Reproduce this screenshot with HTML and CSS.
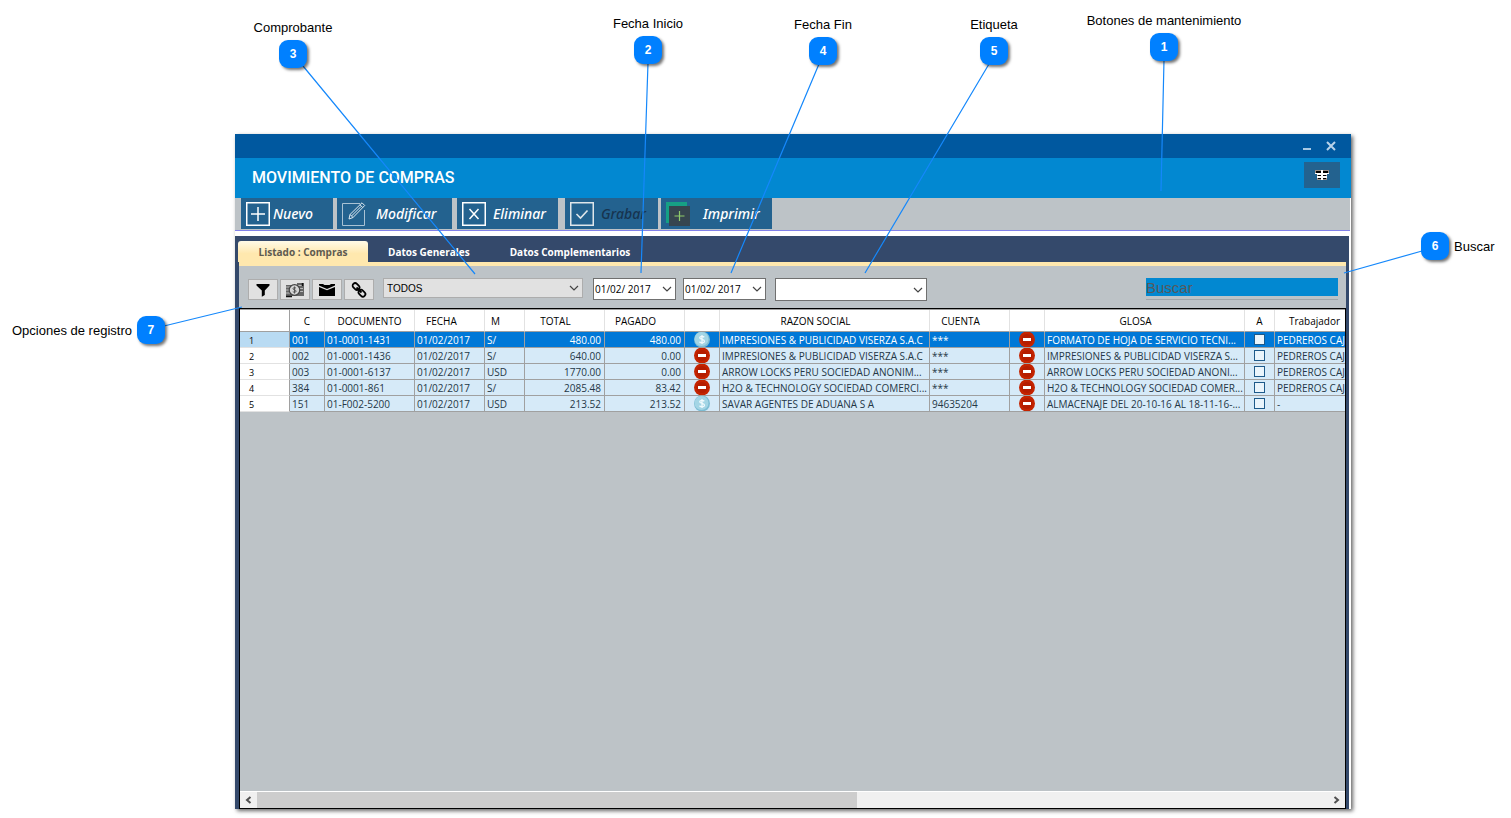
FILE: index.html
```html
<!DOCTYPE html>
<html lang="es">
<head>
<meta charset="utf-8">
<title>Movimiento de compras</title>
<link rel="stylesheet" href="styles.css">
</head>
<body>
<main class="stage">
  <section class="window">
    <div class="titlebar">
      <button class="win-btn" aria-label="Minimizar"><svg width="12" height="12" viewBox="0 0 12 12"><path d="M2 9h8" stroke="#a9c9e4" stroke-width="2"/></svg></button>
      <button class="win-btn" aria-label="Cerrar"><svg width="12" height="12" viewBox="0 0 12 12"><path d="M2 2l8 8M10 2l-8 8" stroke="#b8d3ea" stroke-width="2"/></svg></button>
    </div>
    <header class="header">
      <h1 class="title">MOVIMIENTO DE COMPRAS</h1>
      <button class="menu-btn" aria-label="Opciones"><svg width="14" height="10" viewBox="0 0 14 10"><path fill="#9c9088" d="M0 0h14v4H0zM2 5h10v5H2z"/><path fill="#000" d="M1 1h12v2H1zM3 5h8v1H3zM3 8h8v1H3z"/><path fill="#fff" d="M0 3h14v1H0zM2 4h10v1H2zM2 6h10v2H2zM6 0h2v10H6z"/></svg></button>
    </header>
    <div class="toolbar">
      <button class="tool nuevo"><svg width="24" height="24" viewBox="0 0 24 24" fill="none" stroke="#fff"><rect x=".75" y=".75" width="22.500" height="22.500" stroke-width="1.500"/><path d="M5 12h14M12 5v14" stroke-width="1.500"/></svg>Nuevo</button>
      <button class="tool modificar"><svg width="24" height="24" viewBox="0 0 24 24" fill="none" stroke="#dfe9f0"><path d="M18 1.500H.5v22h22V8" stroke="#a9c2d4"/><path d="M7 17l1-4.500L20 .8l2.700 2.700L11 15.500zM8 12.500l3 3M18 2.800l2.700 2.700M9.500 14L19 4.500"/></svg>Modificar</button>
      <button class="tool eliminar"><svg width="24" height="24" viewBox="0 0 24 24" fill="none" stroke="#fff"><rect x=".75" y=".75" width="22.500" height="22.500" stroke-width="1.500"/><path d="M7.500 7l9 10M16.500 7l-9 10" stroke-width="1.500"/></svg>Eliminar</button>
      <button class="tool grabar" disabled><svg width="24" height="24" viewBox="0 0 24 24" fill="none" stroke="#dfe6ea"><rect x=".75" y=".75" width="22.500" height="22.500" stroke-width="1.500"/><path d="M6.500 12l4 4 7-7.500" stroke-width="1.600"/></svg>Grabar</button>
      <button class="tool imprimir"><svg width="24" height="24" viewBox="0 0 24 24"><path fill="#16a085" d="M0 0h21v4H3v17H0z"/><path fill="#36454f" d="M3 4h21v20H3z"/><path d="M8.500 14h10M13.500 9v10" stroke="#8fcb6b" stroke-width="1.200"/></svg>Imprimir</button>
    </div>
    <div class="body">
      <nav class="tabs">
        <button class="tab active">Listado : Compras</button>
        <button class="tab">Datos Generales</button>
        <button class="tab">Datos Complementarios</button>
      </nav>
      <div class="panel">
        <form class="filters">
          <div class="icon-group">
            <button type="button" class="icon-btn" aria-label="Filtrar"><svg width="16" height="16" viewBox="0 0 16 16"><path d="M1.500 2h13v1.500L9.800 8.500v4.500l-3 1.700V8.500L1.500 3.500z"/></svg></button>
            <button type="button" class="icon-btn" aria-label="Pagos"><svg width="20" height="16" viewBox="0 0 20 16"><path fill="#666" d="M1 3h11V1h7v13H1z"/><path d="M1 5h4M1 8h3M1 11h4M13 3.500h5M15 6.500h3M15 9.500h3" stroke="#bbb" stroke-width="1"/><path d="M1 14.500h6M17.500 1v3" stroke="#111" stroke-width="1.500"/><circle cx="9.500" cy="8" r="5.300" fill="#d4d4d4" stroke="#444" stroke-width="1.200"/><path d="M11 6.200c-1-1-3-.8-3 .5 0 1.600 3.100.8 3.100 2.500 0 1.300-2.300 1.500-3.300.4M9.500 4.500v7" fill="none" stroke="#555"/></svg></button>
            <button type="button" class="icon-btn" aria-label="Enviar"><svg width="16" height="16" viewBox="0 0 16 16"><path d="M0 2h4l1.500 1h5L12 2h4v1.500L8 7 0 3.500zM0 5l8 3.200L16 5v9H0z"/></svg></button>
            <button type="button" class="icon-btn" aria-label="Vincular"><svg width="16" height="16" viewBox="0 0 16 16" fill="none" stroke="#000" stroke-width="1.800"><rect x="1.300" y="2" width="7.500" height="5" rx="2.500" transform="rotate(45 5 4.500)"/><rect x="7.200" y="8.700" width="7.500" height="5" rx="2.500" transform="rotate(45 11 11.200)"/><path d="M5.500 5.500l5 5"/></svg></button>
          </div>
          <div class="combo tipo">
            <select aria-label="Comprobante"><option>TODOS</option></select>
            <svg class="chev" width="10" height="6" viewBox="0 0 10 6"><path d="M1 1l4 4 4-4"/></svg>
          </div>
          <div class="combo fecha">
            <input type="text" value="01/02/ 2017" aria-label="Fecha inicio">
            <svg class="chev" width="10" height="6" viewBox="0 0 10 6"><path d="M1 1l4 4 4-4"/></svg>
          </div>
          <div class="combo fecha">
            <input type="text" value="01/02/ 2017" aria-label="Fecha fin">
            <svg class="chev" width="10" height="6" viewBox="0 0 10 6"><path d="M1 1l4 4 4-4"/></svg>
          </div>
          <div class="combo etiqueta">
            <select aria-label="Etiqueta"><option></option></select>
            <svg class="chev" width="10" height="6" viewBox="0 0 10 6"><path d="M1 1l4 4 4-4"/></svg>
          </div>
          <div class="search"><input type="text" placeholder="Buscar" aria-label="Buscar"></div>
        </form>
        <div class="grid">
          <div class="grid-view">
            <table class="table">
              <colgroup><col class="w-row"><col class="w-icon"><col class="w-doc"><col class="w-fecha"><col class="w-m"><col class="w-num"><col class="w-num"><col class="w-icon"><col class="w-razon"><col class="w-num"><col class="w-icon"><col class="w-glosa"><col class="w-a"><col class="w-num"></colgroup>
              <thead><tr><th></th><th>C</th><th>DOCUMENTO</th><th class="left">FECHA</th><th class="left-s">M</th><th class="sort">TOTAL</th><th class="sort">PAGADO</th><th></th><th class="sort">RAZON SOCIAL</th><th class="sort">CUENTA</th><th></th><th class="sort">GLOSA</th><th>A</th><th>Trabajador</th></tr></thead>
              <tbody>
                <tr class="selected"><th>1</th><td>001</td><td>01-0001-1431</td><td>01/02/2017</td><td>S/</td><td class="num">480.00</td><td class="num">480.00</td><td class="ico"><svg width="16" height="15" viewBox="0 0 16 15"><use href="#coin"/></svg></td><td>IMPRESIONES &amp; PUBLICIDAD VISERZA S.A.C</td><td>***</td><td class="ico"><svg width="16" height="15" viewBox="0 0 16 15"><use href="#minus"/></svg></td><td>FORMATO DE HOJA DE SERVICIO TECNI...</td><td class="chk"><input type="checkbox" aria-label="A 1"></td><td>PEDREROS CAJ</td></tr>
                <tr><th>2</th><td>002</td><td>01-0001-1436</td><td>01/02/2017</td><td>S/</td><td class="num">640.00</td><td class="num">0.00</td><td class="ico"><svg width="16" height="15" viewBox="0 0 16 15"><use href="#minus"/></svg></td><td>IMPRESIONES &amp; PUBLICIDAD VISERZA S.A.C</td><td>***</td><td class="ico"><svg width="16" height="15" viewBox="0 0 16 15"><use href="#minus"/></svg></td><td>IMPRESIONES &amp; PUBLICIDAD VISERZA S...</td><td class="chk"><input type="checkbox" aria-label="A 2"></td><td>PEDREROS CAJ</td></tr>
                <tr><th>3</th><td>003</td><td>01-0001-6137</td><td>01/02/2017</td><td>USD</td><td class="num">1770.00</td><td class="num">0.00</td><td class="ico"><svg width="16" height="15" viewBox="0 0 16 15"><use href="#minus"/></svg></td><td>ARROW LOCKS PERU SOCIEDAD ANONIM...</td><td>***</td><td class="ico"><svg width="16" height="15" viewBox="0 0 16 15"><use href="#minus"/></svg></td><td>ARROW LOCKS PERU SOCIEDAD ANONI...</td><td class="chk"><input type="checkbox" aria-label="A 3"></td><td>PEDREROS CAJ</td></tr>
                <tr><th>4</th><td>384</td><td>01-0001-861</td><td>01/02/2017</td><td>S/</td><td class="num">2085.48</td><td class="num">83.42</td><td class="ico"><svg width="16" height="15" viewBox="0 0 16 15"><use href="#minus"/></svg></td><td>H2O &amp; TECHNOLOGY SOCIEDAD COMERCI...</td><td>***</td><td class="ico"><svg width="16" height="15" viewBox="0 0 16 15"><use href="#minus"/></svg></td><td>H2O &amp; TECHNOLOGY SOCIEDAD COMER...</td><td class="chk"><input type="checkbox" aria-label="A 4"></td><td>PEDREROS CAJ</td></tr>
                <tr><th>5</th><td>151</td><td>01-F002-5200</td><td>01/02/2017</td><td>USD</td><td class="num">213.52</td><td class="num">213.52</td><td class="ico"><svg width="16" height="15" viewBox="0 0 16 15"><use href="#coin"/></svg></td><td>SAVAR AGENTES DE ADUANA S A</td><td>94635204</td><td class="ico"><svg width="16" height="15" viewBox="0 0 16 15"><use href="#minus"/></svg></td><td>ALMACENAJE DEL 20-10-16 AL 18-11-16-...</td><td class="chk"><input type="checkbox" aria-label="A 5"></td><td>-</td></tr>
              </tbody>
            </table>
          </div>
          <div class="scroll">
            <button class="scroll-btn" aria-label="Izquierda"><svg width="7" height="8" viewBox="0 0 7 8"><path d="M5.500 1L2 4l3.500 3"/></svg></button>
            <div class="track"><div class="thumb"></div></div>
            <button class="scroll-btn" aria-label="Derecha"><svg width="7" height="8" viewBox="0 0 7 8"><path d="M1.500 1L5 4 1.500 7"/></svg></button>
          </div>
        </div>
      </div>
    </div>
  </section>

  <svg class="leaders" width="1511" height="818" viewBox="0 0 1511 818" aria-hidden="true">
    <defs>
      <g id="minus"><circle cx="8" cy="7.500" r="8" fill="#c42400"/><circle cx="8" cy="7.500" r="5.500" fill="#b51d00"/><path d="M4 6h8v3H4z" fill="#fff"/></g>
      <g id="coin"><circle cx="8" cy="7.500" r="8" fill="#7dbdd4"/><circle cx="7.500" cy="7" r="7" fill="#a3d5e5"/><path d="M10.300 5.300C9 3.800 5.700 4 5.700 5.800c0 2 4.800 1.200 4.800 3.400 0 2-3.600 2.100-5 .5M8 3v9" fill="none" stroke="#f0fafd" stroke-width="1.300"/></g>
    </defs>
    <path d="M303 66L475 274M648 63L641 273M819 64L731 273M989 64L865 273M1164 60L1161 191M1422 251L1344 273M164 326L242 307"/>
  </svg>

  <div class="callout c3">Comprobante<span class="badge">3</span></div>
  <div class="callout c2">Fecha Inicio<span class="badge">2</span></div>
  <div class="callout c4">Fecha Fin<span class="badge">4</span></div>
  <div class="callout c5">Etiqueta<span class="badge">5</span></div>
  <div class="callout c1">Botones de mantenimiento<span class="badge">1</span></div>
  <div class="callout side c6"><span class="badge">6</span>Buscar</div>
  <div class="callout side c7">Opciones de registro<span class="badge">7</span></div>
</main>
</body>
</html>
```
FILE: styles.css
```css
* { box-sizing: border-box; }
body { margin: 0; background: #fff; font-family: "Open Sans", "Noto Sans", sans-serif; }
button, input, select { font: inherit; margin: 0; padding: 0; border: 0; border-radius: 0; }
svg { display: block; flex: none; }

.stage { position: relative; display: flex; min-height: 100vh; padding: 134px 160px 9px 235px; overflow: hidden; }
.window { flex: 1; min-width: 0; display: flex; flex-direction: column; background: #fff; box-shadow: 2px 2px 4px rgba(0, 0, 0, .6); }

.titlebar { display: flex; justify-content: flex-end; align-items: center; gap: 12px; height: 24px; padding-right: 14px; background: #00589f; }
.win-btn { background: none; }
.header { display: flex; justify-content: space-between; align-items: center; height: 40px; padding: 0 11px 0 17px; background: #0288d1; }
.title { margin: 0; font: 500 16px/20px Roboto, sans-serif; color: #fff; }
.menu-btn { display: flex; align-items: center; justify-content: center; width: 36px; height: 26px; margin-bottom: 6px; background: #23628f; }

.toolbar { display: flex; height: 33px; margin-right: 1px; padding-left: 6px; background: #bdc3c7; border-bottom: 1px solid #8080e8; align-items: flex-start; }
.tool { display: flex; align-items: center; height: 31px; padding-left: 5px; background: #23628f; color: #fff; font-family: "Noto Sans", sans-serif; font-size: 14px; font-weight: 500; font-style: italic; }
.nuevo { width: 92px; gap: 3px; margin-right: 4px; }
.modificar { width: 115px; gap: 10px; margin-right: 5px; }
.eliminar { width: 101px; gap: 7px; margin-right: 7px; }
.grabar { width: 93px; gap: 7px; margin-right: 3px; color: #17344f; }
.imprimir { width: 111px; gap: 13px; }

.body { flex: 1; display: flex; flex-direction: column; margin: 5px 2px 0 0; padding: 0 3px 0 4px; background: #34496b; }
.tabs { display: flex; align-items: flex-end; height: 26px; margin-left: -1px; }
.tab { height: 21px; padding: 0 20px; background: none; color: #fff; font-size: 10px; line-height: 20px; font-weight: 700; white-space: nowrap; }
.tab.active { width: 130px; background: linear-gradient(#fffbe8, #ffe8ae 60%); color: #5e5a50; border-radius: 3px 3px 0 0; }
.panel { flex: 1; display: flex; flex-direction: column; border-top: 4px solid #ffe8ae; background: #bdc3c7; }

.filters { display: flex; align-items: flex-start; height: 42px; padding: 12px 8px 0 9px; }
.icon-group { display: flex; gap: 2px; margin: 1px 9px 0 0; }
.icon-btn { display: flex; align-items: center; justify-content: center; width: 30px; height: 21px; background: #e1e1e1; border: 1px solid #adadad; }
.combo { display: flex; align-items: center; padding-right: 3px; background: #fff; border: 1px solid #707070; color: #000; }
.combo select, .combo input { flex: 1; min-width: 0; height: 18px; appearance: none; background: none; color: inherit; }
.chev { fill: none; stroke: #444; stroke-width: 1.2; }
.tipo { width: 200px; height: 20px; margin-right: 10px; padding-left: 3px; background: #e1e1e1; border-color: #adadad; font: 10px "Liberation Sans", sans-serif; }
.fecha { width: 83px; height: 22px; margin-right: 7px; padding-left: 1px; font-size: 10px; }
.etiqueta { width: 152px; height: 23px; margin-left: 2px; }
.search { width: 192px; margin-left: auto; padding-bottom: 3px; border-bottom: 1px solid #a0a5a9; }
.search input { display: block; width: 100%; height: 18px; background: #0288d1; font: 15px "Liberation Sans", sans-serif; }
.search input::placeholder { color: #57595b; opacity: 1; }

.grid { flex: 1; display: flex; flex-direction: column; border: 1px solid #000; }
.grid-view { flex: 1; overflow: hidden; width: 0; min-width: 100%; border-top: 1px solid #a0a0a0; }
.table { width: 1115px; table-layout: fixed; border-collapse: separate; border-spacing: 0; font-size: 10px; line-height: 14px; color: #253746; }
.table th, .table td { height: 16px; padding: 0; overflow: hidden; white-space: nowrap; font-weight: 400; border-right: 1px solid #a0a0a0; border-bottom: 1px solid #a0a0a0; }
.table thead th { height: 22px; background: #fff; color: #000; border-right-color: #e2e2e2; text-align: center; }
.table thead th:first-child { border-right-color: #a0a0a0; }
.table .left { text-align: left; padding-left: 11px; }
.table .left-s { text-align: left; padding-left: 6px; }
.table thead .sort { padding-right: 18px; }
.table tbody th { padding: 3px 0 0 9px; font-size: 9px; line-height: 12px; text-align: left; background: #fff; color: #000; border-bottom-color: #e2e2e2; }
.table tbody td { padding: 0 0 0 2px; background: #d6eaf8; }
.table tbody .selected th { background: #b9dbf3; }
.table tbody .selected td { background: #0078d7; color: #fff; }
.table tbody .num { text-align: right; padding: 0 3px 0 0; }
.table tbody .ico { padding: 0 0 0 9px; }
.table tbody .chk { padding: 0 0 0 9px; }
.chk input { display: block; appearance: none; width: 11px; height: 11px; background: #eaf5fc; border: 1px solid #1d5a8a; }
.w-row { width: 50px; }
.w-icon { width: 35px; }
.w-doc { width: 90px; }
.w-fecha { width: 70px; }
.w-m { width: 40px; }
.w-num { width: 80px; }
.w-razon { width: 210px; }
.w-glosa { width: 200px; }
.w-a { width: 30px; }

.scroll { display: flex; height: 17px; background: #f0f0f0; border-top: 1px solid #fff; }
.scroll-btn { display: flex; align-items: center; justify-content: center; width: 17px; background: none; }
.scroll-btn path { fill: none; stroke: #505050; stroke-width: 2; }
.track { flex: 1; display: flex; }
.thumb { width: 56%; background: #cdcdcd; }

.leaders { position: absolute; left: 0; top: 0; pointer-events: none; }
.leaders > path { fill: none; stroke: #1588fb; stroke-width: 1.2; }
.callout { position: absolute; display: flex; flex-direction: column; align-items: center; gap: 5px; width: 180px; font: 13px/15px "Liberation Sans", sans-serif; color: #000; }
.badge { display: flex; align-items: center; justify-content: center; width: 28px; height: 28px; border-radius: 9px; background: #0080ff; color: #fff; font-size: 12px; font-weight: 700; box-shadow: 2px 2px 3px rgba(0, 0, 0, .55); }
.callout.side { flex-direction: row; width: auto; }
.c3 { left: 203px; top: 20px; }
.c2 { left: 558px; top: 16px; }
.c4 { left: 733px; top: 17px; }
.c5 { left: 904px; top: 17px; }
.c1 { left: 1074px; top: 13px; }
.c6 { left: 1421px; top: 232px; }
.c7 { left: 12px; top: 316px; }
```
